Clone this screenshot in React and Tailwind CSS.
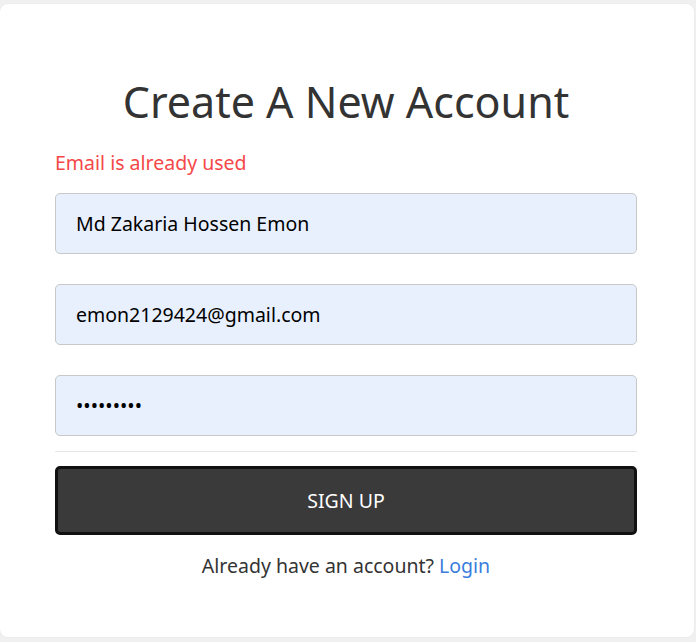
function App() {
	return (
		<div className="min-h-[642px] bg-[#f0f0f0] pt-1 pb-1 font-['Noto_Sans',sans-serif]">
			<div className="w-[694px] bg-white rounded-lg pl-[55px] pr-[57px] pt-[71px] pb-[56px] shadow-[0_0_2px_rgba(0,0,0,0.05)]">
				<h1 className="text-center text-[43px] leading-[53px] text-[#333]">
					Create A New Account
				</h1>

				<p className="mt-5 text-[19.5px] leading-[30px] text-[#f44848]">
					Email is already used
				</p>

				<form className="mt-[15px] flex flex-col gap-[30px]">
					<input
						type="text"
						readOnly
						value="Md Zakaria Hossen Emon"
						className="h-[61px] w-full rounded-[5px] border border-[#c8c8c8] bg-[#e8f0fe] px-5 text-[19.5px] text-black outline-none"
					/>
					<input
						type="email"
						readOnly
						value="emon2129424@gmail.com"
						className="h-[61px] w-full rounded-[5px] border border-[#c8c8c8] bg-[#e8f0fe] px-5 text-[19.5px] text-black outline-none"
					/>
					<input
						type="password"
						readOnly
						value="123456789"
						className="h-[61px] w-full rounded-[5px] border border-[#c8c8c8] bg-[#e8f0fe] px-5 text-[19.5px] text-black outline-none"
					/>
				</form>

				<hr className="mt-[15px] border-[#e6e6e6]" />

				<button className="mt-[14px] h-[69px] w-full rounded-[5px] border-[3px] border-[#111] bg-[#3a3a3a] text-[19.5px] text-white">
					SIGN UP
				</button>

				<p className="mt-4 text-center text-[19.5px] leading-[30px] text-[#333]">
					Already have an account?{" "}
					<a href="#" className="text-[#3b7ddd]">
						Login
					</a>
				</p>
			</div>
		</div>
	);
}

export default App;
